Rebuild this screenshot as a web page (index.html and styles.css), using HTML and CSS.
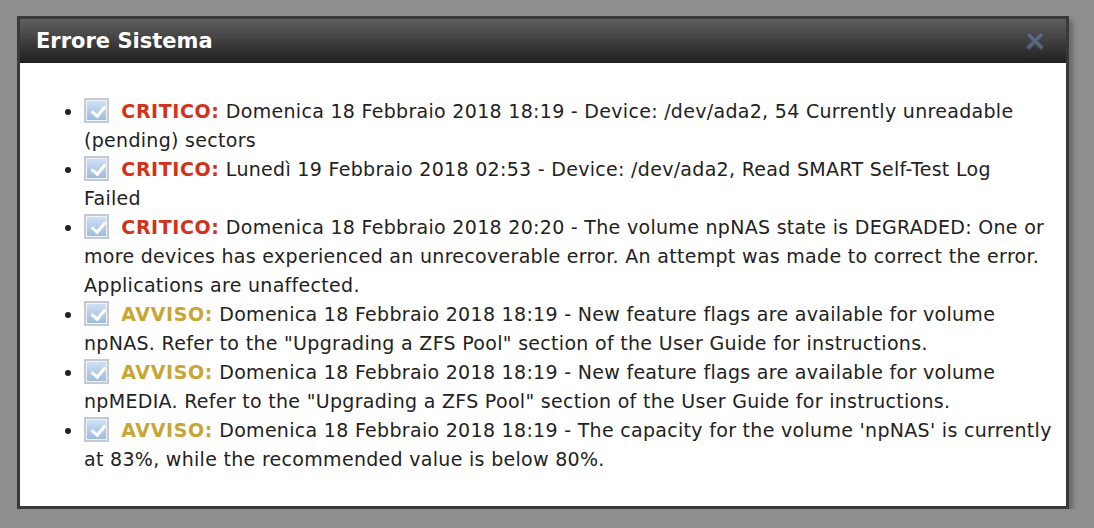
FILE: index.html
```html
<!DOCTYPE html>
<html lang="it">
<head>
    <meta charset="UTF-8">
    <title>Errore Sistema</title>
    <link rel="stylesheet" href="styles.css">
</head>
<body>
    <div class="dialog">
        <div class="titlebar">
            <span class="title">Errore Sistema</span>
            <svg class="close" width="18" height="18" viewBox="0 0 18 18">
                <path d="M3 3 L15 15 M15 3 L3 15" stroke="#3f4757" stroke-width="6" stroke-linecap="round"/>
                <path d="M3 3 L15 15 M15 3 L3 15" stroke="#64728a" stroke-width="3.5" stroke-linecap="round"/>
            </svg>
        </div>
        <div class="content">
            <ul class="alerts">
                <li><span class="check"></span> <b class="crit">CRITICO:</b> Domenica 18 Febbraio 2018 18:19 - Device: /dev/ada2, 54 Currently unreadable (pending) sectors</li>
                <li><span class="check"></span> <b class="crit">CRITICO:</b> Lunedì 19 Febbraio 2018 02:53 - Device: /dev/ada2, Read SMART Self-Test Log Failed</li>
                <li><span class="check"></span> <b class="crit">CRITICO:</b> Domenica 18 Febbraio 2018 20:20 - The volume npNAS state is DEGRADED: One or more devices has experienced an unrecoverable error. An attempt was made to correct the error. Applications are unaffected.</li>
                <li><span class="check"></span> <b class="warn">AVVISO:</b> Domenica 18 Febbraio 2018 18:19 - New feature flags are available for volume npNAS. Refer to the "Upgrading a ZFS Pool" section of the User Guide for instructions.</li>
                <li><span class="check"></span> <b class="warn">AVVISO:</b> Domenica 18 Febbraio 2018 18:19 - New feature flags are available for volume npMEDIA. Refer to the "Upgrading a ZFS Pool" section of the User Guide for instructions.</li>
                <li><span class="check"></span> <b class="warn">AVVISO:</b> Domenica 18 Febbraio 2018 18:19 - The capacity for the volume 'npNAS' is currently at 83%, while the recommended value is below 80%.</li>
            </ul>
        </div>
    </div>
</body>
</html>
```

FILE: styles.css
```css
body {
    margin: 0;
    background: #8e8e8e;
    font-family: "DejaVu Sans", Verdana, sans-serif;
    color: #222;
}
.dialog {
    margin: 16px 0 0 17px;
    width: 1046px;
    height: 487px;
    border: 3px solid #3a3a3a;
    background: #fff;
    box-shadow: 4px 4px 4px rgba(0, 0, 0, 0.25);
}
.titlebar {
    height: 44px;
    background: linear-gradient(#5f5f5f, #1f1f1f);
    display: flex;
    align-items: center;
    justify-content: space-between;
    padding: 0 22px 0 16px;
}
.title {
    color: #fff;
    font-weight: bold;
    font-size: 21px;
}
.close {
    opacity: 0.8;
}
.content {
    padding: 34px 12px 0 0;
}
.alerts {
    margin: 0;
    padding-left: 64px;
    font-size: 19px;
    line-height: 29px;
    letter-spacing: 0.3px;
}
.check {
    display: inline-block;
    box-sizing: border-box;
    width: 25px;
    height: 25px;
    border: 2px solid #c4cad3;
    padding: 1px;
    background: #eef2f7;
    vertical-align: -5px;
    position: relative;
}
.check::before {
    content: "";
    display: block;
    width: 100%;
    height: 100%;
    background: linear-gradient(#cfe0f2, #9fbbdd);
}
.check::after {
    content: "";
    position: absolute;
    left: 8px;
    top: 3px;
    width: 6px;
    height: 11px;
    border: solid #fff;
    border-width: 0 3px 3px 0;
    transform: rotate(40deg);
}
.crit,
.warn {
    margin-left: 6px;
    letter-spacing: 0.6px;
}
.crit {
    color: #d3311a;
}
.warn {
    color: #c9a535;
}
```
